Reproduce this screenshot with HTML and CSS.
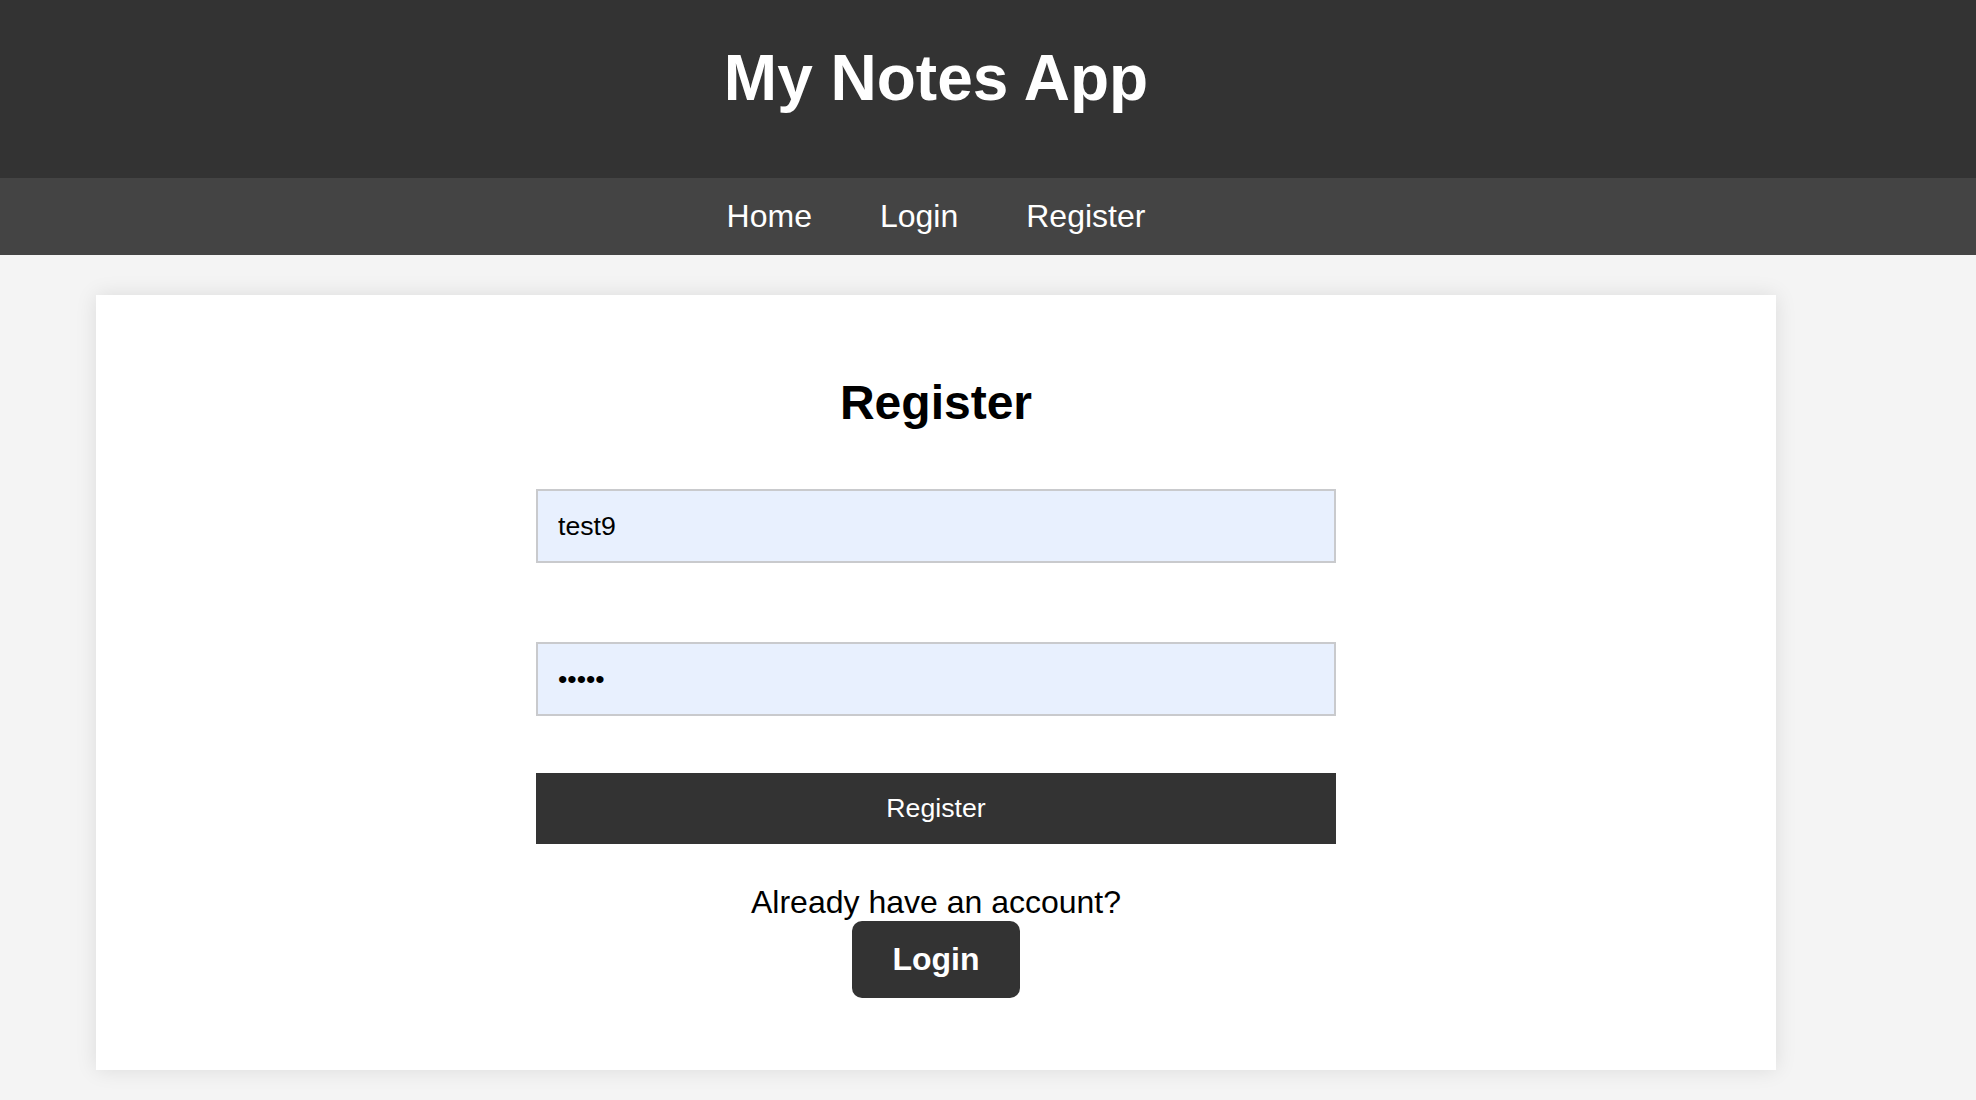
FILE: index.html
```html
<!DOCTYPE html>
<html lang="en">
<head>
<meta charset="utf-8">
<title>My Notes App</title>
<link rel="stylesheet" href="styles.css">
</head>
<body>
<header class="site-header">
  <div class="wrap">
    <h1 class="site-title">My Notes App</h1>
  </div>
</header>
<nav class="site-nav">
  <div class="wrap nav-links">
    <a href="#" class="nav-link">Home</a>
    <a href="#" class="nav-link">Login</a>
    <a href="#" class="nav-link">Register</a>
  </div>
</nav>
<main class="wrap main">
  <section class="card">
    <h2 class="card-title">Register</h2>
    <form class="form">
      <input class="field field-user" type="text" value="test9">
      <input class="field field-pass" type="password" value="12345">
      <button class="submit" type="button">Register</button>
    </form>
    <p class="switch-text">Already have an account?</p>
    <div class="switch-row"><a href="#" class="switch-btn">Login</a></div>
  </section>
</main>
</body>
</html>
```

FILE: styles.css
```css
* { box-sizing: border-box; }

body {
  margin: 0;
  background: #f4f4f4;
  font-family: "Liberation Sans", Arial, Helvetica, sans-serif;
  color: #000;
}

.wrap {
  width: 1680px;
  margin-left: 96px;
}

.site-header {
  background: #333;
  height: 178px;
  padding-top: 41px;
}

.site-title {
  margin: 0;
  text-align: center;
  color: #fff;
  font-size: 64px;
  font-weight: bold;
  line-height: 74px;
}

.site-nav {
  background: #444;
  height: 77px;
}

.nav-links {
  height: 77px;
  display: flex;
  justify-content: center;
  align-items: center;
  gap: 68px;
}

.nav-link {
  color: #fff;
  text-decoration: none;
  font-size: 32px;
  line-height: 37px;
}

.main {
  padding: 40px 0;
}

.card {
  background: #fff;
  box-shadow: 0 0 20px rgba(0, 0, 0, 0.1);
  padding: 40px 40px 0;
  text-align: center;
}

.card-title {
  margin: 40px 0 0;
  font-size: 48px;
  line-height: 55px;
  font-weight: bold;
}

.form {
  display: flex;
  flex-direction: column;
  align-items: center;
}

.field {
  display: block;
  width: 800px;
  height: 74px;
  border: 2px solid #c9cacd;
  background: #e8f0fe;
  padding: 20px;
  font-family: "Liberation Sans", Arial, Helvetica, sans-serif;
  font-size: 26.67px;
  line-height: 30px;
  color: #000;
  outline: none;
}

.field-user { margin-top: 59px; }
.field-pass { margin-top: 79px; }

.submit {
  display: block;
  width: 800px;
  height: 71px;
  margin-top: 57px;
  border: none;
  background: #333;
  color: #fff;
  font-family: "Liberation Sans", Arial, Helvetica, sans-serif;
  font-size: 26.67px;
  line-height: 31px;
  padding: 20px;
}

.switch-text {
  margin: 40px 0 0;
  font-size: 32px;
  line-height: 37px;
}

.switch-row {
  padding-bottom: 72px;
}

.switch-btn {
  display: inline-block;
  background: #333;
  color: #fff;
  text-decoration: none;
  font-size: 32px;
  font-weight: bold;
  line-height: 37px;
  padding: 20px 40px;
  border-radius: 10px;
  vertical-align: top;
}
```
